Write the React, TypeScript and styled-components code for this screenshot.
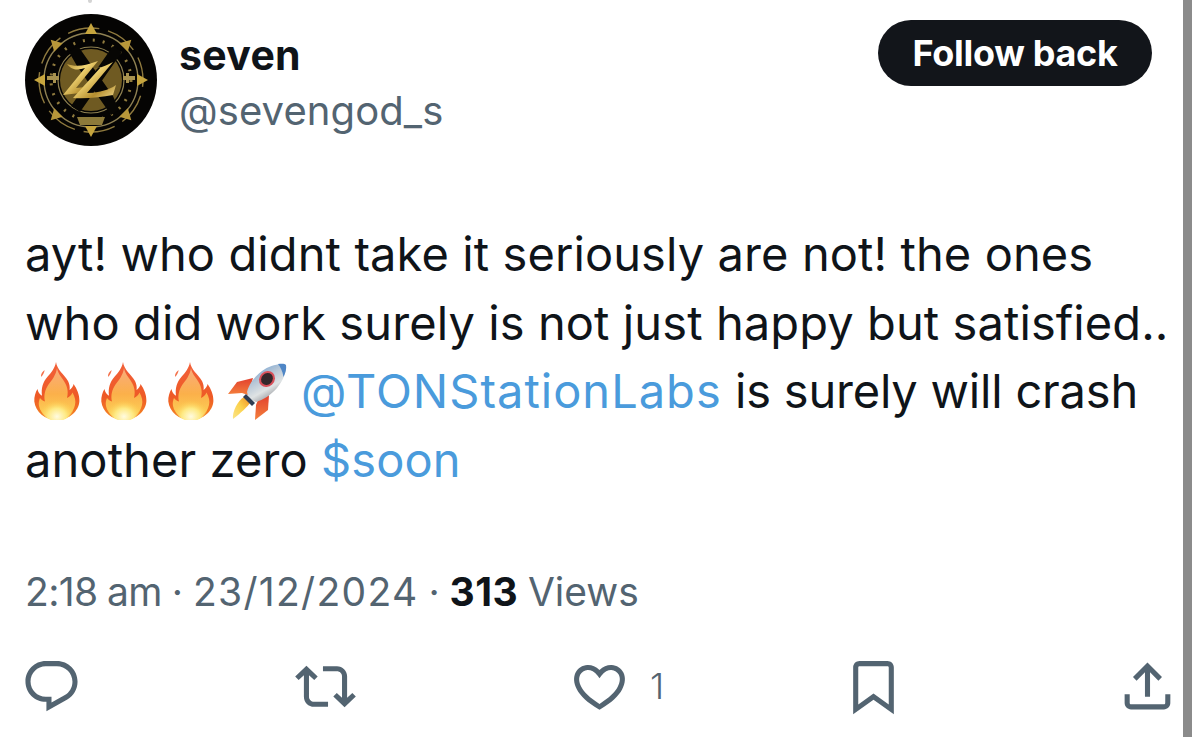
import React from 'react';
import styled, { createGlobalStyle } from 'styled-components';

const Global = createGlobalStyle`
  html, body { margin: 0; padding: 0; background: #fff; overflow: hidden; }
  body { font-family: Inter, "Liberation Sans", sans-serif; }
`;

const Page = styled.div`
  position: relative;
  display: flex;
  width: 1200px;
  height: 737px;
  background: #fff;
  overflow: hidden;
`;
const Tick = styled.div`
  position: absolute;
  left: 88px;
  top: 0;
  width: 4px;
  height: 3px;
  background: #d4d4d4;
  border-radius: 0 0 2px 2px;
`;
const Tweet = styled.main`
  width: 1183px;
  flex: none;
  display: flex;
  flex-direction: column;
`;
const Strip = styled.div`
  width: 9px;
  flex: none;
  background: #8b8b8b;
`;
const Header = styled.header`
  display: flex;
  align-items: flex-start;
  padding: 14px 31px 0 25px;
  height: 220px;
  box-sizing: border-box;
`;
const AvatarSvg = styled.svg`
  width: 132px;
  height: 132px;
  flex: none;
  filter: blur(0.5px);
`;
const Names = styled.div`
  margin-left: 22px;
  padding-top: 16px;
  flex: 1;
`;
const Name = styled.div`
  font-size: 41px;
  line-height: 50px;
  font-weight: 700;
  color: #0f1419;
  letter-spacing: 0.3px;
`;
const Handle = styled.div`
  font-size: 40px;
  line-height: 62px;
  color: #536471;
  letter-spacing: 0.1px;
`;
const FollowButton = styled.button`
  width: 274px;
  height: 66px;
  margin-top: 6px;
  border: 0;
  border-radius: 33px;
  background: #12151a;
  color: #fff;
  font: 700 36px/66px Inter, "Liberation Sans", sans-serif;
  letter-spacing: -0.3px;
  padding: 0;
`;
const Body = styled.p`
  margin: 0;
  padding-left: 25px;
  font-size: 47px;
  line-height: 68.5px;
  color: #0f1419;
  white-space: nowrap;
  letter-spacing: 0.1px;
`;
const Link = styled.span<{ $spacing?: number }>`
  color: #4a9bdc;
  letter-spacing: ${(p) => p.$spacing ?? 0.1}px;
`;
const Tail = styled.span`
  letter-spacing: -0.2px;
`;
const FlameSvg = styled.svg`
  display: inline-block;
  width: 46px;
  height: 58px;
  margin-left: 9px;
  margin-right: 12px;
  vertical-align: -12px;
  filter: blur(0.4px);
`;
const RocketSvg = styled.svg`
  display: inline-block;
  width: 59px;
  height: 57px;
  margin-left: 2px;
  margin-right: 14px;
  vertical-align: -12px;
  filter: blur(0.4px);
`;
const Meta = styled.div`
  margin-top: 73px;
  padding-left: 25px;
  font-size: 39px;
  line-height: 50px;
  color: #536471;
  word-spacing: -1px;
  white-space: nowrap;
`;
const MetaPart = styled.span<{ $spacing: number }>`
  letter-spacing: ${(p) => p.$spacing}px;
`;
const Strong = styled.strong`
  color: #0f1419;
  font-weight: 700;
  letter-spacing: 0.4px;
`;
const Actions = styled.div`
  display: grid;
  grid-template-columns: repeat(5, 274px);
  padding-left: 21px;
  margin-top: 39px;
`;
const Action = styled.div`
  display: flex;
  align-items: center;
  height: 61px;
  color: #536471;
`;
const ActionIcon = styled.svg`
  width: 61px;
  height: 61px;
  flex: none;
  fill: currentColor;
`;
const Count = styled.span`
  font-size: 36px;
  line-height: 61px;
  font-weight: 300;
  margin-left: 20px;
`;

const icons = {
  reply: 'M1.751 10c0-4.42 3.584-8 8.005-8h4.366c4.49 0 8.129 3.64 8.129 8.13 0 2.96-1.607 5.68-4.196 7.11l-8.054 4.46v-3.69h-.067c-4.49.1-8.183-3.51-8.183-8.01zm8.005-6c-3.317 0-6.005 2.69-6.005 6 0 3.37 2.77 6.08 6.138 6.01l.351-.01h1.761v2.3l5.087-2.81c1.951-1.08 3.163-3.13 3.163-5.36 0-3.39-2.744-6.13-6.129-6.13H9.756z',
  retweet: 'M4.5 3.88l4.432 4.14-1.364 1.46L5.5 7.55V16c0 1.1.896 2 2 2H13v2H7.5c-2.209 0-4-1.79-4-4V7.55L1.432 9.48.068 8.02 4.5 3.88zM16.5 6H11V4h5.5c2.209 0 4 1.79 4 4v8.45l2.068-1.93 1.364 1.46-4.432 4.14-4.432-4.14 1.364-1.46 2.068 1.93V8c0-1.1-.896-2-2-2z',
  heart: 'M16.697 5.5c-1.222-.06-2.679.51-3.89 2.16l-.805 1.09-.806-1.09C9.984 6.01 8.526 5.44 7.304 5.5c-1.243.07-2.349.78-2.91 1.91-.552 1.12-.633 2.78.479 4.82 1.074 1.97 3.257 4.27 7.129 6.61 3.87-2.34 6.052-4.64 7.126-6.61 1.111-2.04 1.03-3.7.477-4.82-.561-1.13-1.666-1.84-2.908-1.91zm4.187 7.69c-1.351 2.48-4.001 5.12-8.379 7.67l-.503.3-.504-.3c-4.379-2.55-7.029-5.19-8.382-7.67-1.36-2.5-1.41-4.86-.514-6.67.887-1.79 2.647-2.91 4.601-3.01 1.651-.09 3.368.56 4.798 2.01 1.429-1.45 3.146-2.1 4.796-2.01 1.954.1 3.714 1.22 4.601 3.01.896 1.81.846 4.17-.514 6.67z',
  bookmark: 'M4 4.5C4 3.12 5.119 2 6.5 2h11C18.881 2 20 3.12 20 4.5v18.44l-8-5.71-8 5.71V4.5zM6.5 4c-.276 0-.5.22-.5.5v14.56l6-4.29 6 4.29V4.5c0-.28-.224-.5-.5-.5h-11z',
  share: 'M12 2.59l5.7 5.7-1.41 1.42L13 6.41V16h-2V6.41l-3.3 3.3-1.41-1.42L12 2.59zM21 15l-.02 3.51c0 1.38-1.12 2.49-2.5 2.49H5.5C4.11 21 3 19.88 3 18.5V15h2v3.5c0 .28.22.5.5.5h12.98c.28 0 .5-.22.5-.5L19 15h2z',
};

const Icon = ({ d }: { d: string }) => (
  <ActionIcon viewBox="0 0 24 24"><path d={d} /></ActionIcon>
);

const Flame = ({ id }: { id: string }) => (
  <FlameSvg viewBox="0 0 46 58" aria-label="fire" role="img">
    <defs>
      <linearGradient id={`fo${id}`} x1="0" y1="0" x2="0" y2="1">
        <stop offset="0" stopColor="#f2603a" />
        <stop offset="0.6" stopColor="#ee5a26" />
        <stop offset="1" stopColor="#f58a22" />
      </linearGradient>
      <linearGradient id={`fm${id}`} x1="0" y1="0" x2="0" y2="1">
        <stop offset="0" stopColor="#f9ab7c" />
        <stop offset="0.5" stopColor="#fbb04a" />
        <stop offset="1" stopColor="#fdd75a" />
      </linearGradient>
      <radialGradient id={`fg${id}`} cx="0.5" cy="0.85" r="0.55">
        <stop offset="0" stopColor="#fffbe0" />
        <stop offset="0.5" stopColor="#fee982" />
        <stop offset="1" stopColor="#fdc84a" stopOpacity="0" />
      </radialGradient>
    </defs>
    <path d="M7 15c-.4-3 1.4-5.3 3.6-7-.3 2.8-1.6 5-3.6 7z" fill="#f4704a" />
    <path d="M22 0c1 8 8 12 12 19 1.5 3 2 6 1.6 9 2-1.4 3.6-3.6 4-6 3.4 5 6 10.600 5.800 17C45 49 35 58 23 58 11 58 1.500 50 .3 39.500 0 35 1.500 30 3.500 27c.6 3 2 5.500 4.500 6.800-1-7.500 1-14 5.500-19C17 11 21 6 22 0z" fill={`url(#fo${id})`} />
    <path d="M23 6c1 7 7 11 9.500 18 1.500 4 1.500 8 .5 12 2.500-1 4.500-3 5.500-5.500C41 35 42 39 41 43c-2 9-10 15-18 15S6.500 52 5 44c-.6-3 0-6 1-8 1.500 2 3 3 5 3.500-1.500-6 0-12 3.500-17C18 18 22 13 23 6z" fill={`url(#fm${id})`} />
    <ellipse cx="23" cy="44" rx="17" ry="15" fill={`url(#fg${id})`} />
  </FlameSvg>
);

const Rocket = () => (
  <RocketSvg viewBox="0 0 59 57" aria-label="rocket" role="img">
    <defs>
      <linearGradient id="rb" x1="0.2" y1="0" x2="0.8" y2="1">
        <stop offset="0" stopColor="#6a9ed4" />
        <stop offset="0.35" stopColor="#b6c6d6" />
        <stop offset="0.62" stopColor="#dfe3e4" />
        <stop offset="0.85" stopColor="#9b9ea3" />
        <stop offset="1" stopColor="#6f7277" />
      </linearGradient>
      <linearGradient id="rf" x1="0" y1="0" x2="0" y2="1">
        <stop offset="0" stopColor="#e2402e" />
        <stop offset="1" stopColor="#f4803c" />
      </linearGradient>
      <linearGradient id="ry" x1="1" y1="0" x2="0" y2="1">
        <stop offset="0" stopColor="#f08a24" />
        <stop offset="0.5" stopColor="#fbd24c" />
        <stop offset="1" stopColor="#fbe488" />
      </linearGradient>
    </defs>
    <path d="M25 15 9 19 0 31l14-1 6 2z" fill="url(#rf)" />
    <path d="M41 32l-1 15-13 10 1-15 2-5z" fill="url(#rf)" />
    <path d="M16 34c2-1 5 0 6 2s1 3 0 4c-2 3-9 10-17 16-1-7 5-19 11-22z" fill="url(#ry)" />
    <path d="M58 2c.700 6-2 14-9 23-6 7-14 12-21 14-5-2-8-5-9-10 2-8 8-16 15-21C42 2 52 0 58 2z" fill="url(#rb)" />
    <path d="M50 1c4-.7 7-.4 8 1 .700 4-.6 8-2.500 12-1-6-3-10-5.500-13z" fill="#4f86c6" />
    <path d="M18 31l9 9-3 3-9-9z" fill="#2f3d52" />
    <ellipse cx="39" cy="16" rx="8.500" ry="7.500" transform="rotate(-45 39 16)" fill="#d8505a" />
    <ellipse cx="39" cy="16" rx="6.300" ry="5.500" transform="rotate(-45 39 16)" fill="#33282c" />
  </RocketSvg>
);

const triangleAngles = [0, 45, 90, 135, 180, 225, 270, 315];

const Avatar = () => (
  <AvatarSvg viewBox="0 0 132 132" aria-label="seven avatar" role="img">
    <defs>
      <linearGradient id="az" x1="0" y1="0" x2="1" y2="1">
        <stop offset="0" stopColor="#a67f28" />
        <stop offset="0.4" stopColor="#f2d675" />
        <stop offset="0.7" stopColor="#b58e2f" />
        <stop offset="1" stopColor="#f0d88a" />
      </linearGradient>
    </defs>
    <circle cx="66" cy="66" r="66" fill="#050403" />
    <circle cx="66" cy="66" r="47" fill="none" stroke="#8f8152" strokeWidth="1.400" />
    <circle cx="66" cy="66" r="52" fill="none" stroke="#8f7a3e" strokeWidth="1.400" strokeDasharray="32 9" strokeDashoffset="25" />
    <circle cx="66" cy="66" r="33" fill="none" stroke="#8f8152" strokeWidth="1.200" />
    <circle cx="66" cy="66" r="40" fill="none" stroke="#8f7a3e" strokeWidth="3" strokeDasharray="2 8" />
    <circle cx="66" cy="66" r="31" fill="#6f5a22" />
    <path d="M44 38l9-6 35 50 6 14-8 5-34-49zM88 32l9 6-42 60-9-6z" fill="#070604" />
    {triangleAngles.map((a) => (
      <path key={a} d="M66 9l6 11H60z" transform={`rotate(${a} 66 66)`} fill={a % 90 === 0 ? '#c6a53e' : '#b8973a'} />
    ))}
    <path d="M22 62h6v-3h3v3h3v4h-3v3h-3v-3h-6zM110 62h-6v-3h-3v3h-3v4h3v3h3v-3h6z" fill="#a8924f" />
    <path d="M42 50c8 3 18 2 28-2l3-1-22 27 10-1-6 6-17 2 22-27c-6 2-13 3-18-4z" fill="url(#az)" />
    <path d="M58 56c8 0 20-2 30-8l-26 31c9 0 18-2 26-6l3-2-3 10c-12 2-26 4-40 3l28-31c-6 2-12 3-18 3z" fill="url(#az)" />
    <path d="M52 103h28l-3 8H55z" fill="#8d7a3a" />
  </AvatarSvg>
);

export default function App() {
  return (
    <Page>
      <Global />
      <Tick />
      <Tweet>
        <Header>
          <Avatar />
          <Names>
            <Name>seven</Name>
            <Handle>@sevengod_s</Handle>
          </Names>
          <FollowButton>Follow back</FollowButton>
        </Header>
        <Body>
          ayt! who didnt take it seriously are not! the ones<br />
          who did work surely is not just happy but satisfied..<br />
          <Flame id="a" /><Flame id="b" /><Flame id="c" /><Rocket />
          <Link $spacing={1}>@TONStationLabs</Link> <Tail>is surely will crash</Tail><br />
          another zero <Link>$soon</Link>
        </Body>
        <Meta>
          <MetaPart $spacing={-0.6}>2:18 am</MetaPart> · <MetaPart $spacing={1.3}>23/12/2024</MetaPart> · <Strong>313</Strong> Views
        </Meta>
        <Actions>
          <Action><Icon d={icons.reply} /></Action>
          <Action><Icon d={icons.retweet} /></Action>
          <Action><Icon d={icons.heart} /><Count>1</Count></Action>
          <Action><Icon d={icons.bookmark} /></Action>
          <Action><Icon d={icons.share} /></Action>
        </Actions>
      </Tweet>
      <Strip />
    </Page>
  );
}
